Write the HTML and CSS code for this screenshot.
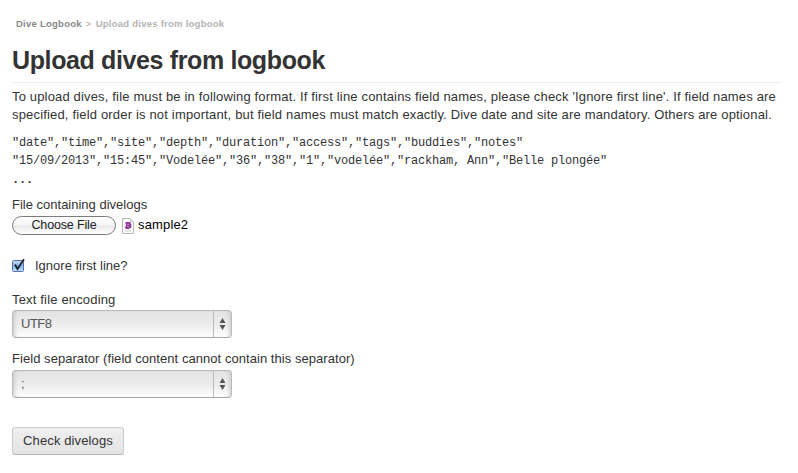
FILE: index.html
```html
<!DOCTYPE html>
<html lang="en">
<head>
<meta charset="utf-8">
<title>Upload dives from logbook</title>
<link rel="stylesheet" href="styles.css">
</head>
<body>
<nav class="breadcrumb"><a class="crumb">Dive Logbook</a><span class="divider">&gt;</span><span class="current">Upload dives from logbook</span></nav>
<h1 class="title"><span>Upload dives from logbook</span></h1>
<p class="intro"><span class="line-a">To upload dives, file must be in following format. If first line contains field names, please check 'Ignore first line'. If field names are</span><br><span class="line-b">specified, field order is not important, but field names must match exactly. Dive date and site are mandatory. Others are optional.</span></p>
<pre class="sample">"date","time","site","depth","duration","access","tags","buddies","notes"
"15/09/2013","15:45","Vodelée","36","38","1","vodelée","rackham, Ann","Belle plongée"
<span class="dots">...</span></pre>
<form class="form">
  <label class="label label-file"><span>File containing divelogs</span></label>
  <div class="file">
    <button type="button" class="choose"><span>Choose File</span></button>
    <svg class="doc" width="12" height="16" viewBox="0 0 12 16">
      <path d="M.5.5h8l3 3v12H.5z" fill="#fdfdfd" stroke="#b9b9b9"/>
      <path d="M8.500.5v3h3" fill="#eee" stroke="#c8c8c8"/>
      <path d="M3.500 4h5v1.500h.8v4.500H8l-1 1H4l-1-1V8.500h1V6.500h-.5z" fill="#8d3c98"/>
      <path d="M5 6.300h2M5 8.700h2" stroke="#d9b3df" stroke-width=".7"/>
      <path d="M3 13h6" stroke="#bbb" stroke-dasharray="1.500 .5"/>
    </svg>
    <span class="filename">sample2</span>
  </div>
  <label class="check">
    <svg width="14" height="16" viewBox="0 0 14 16">
      <defs><linearGradient id="blue" x2="0" y2="1"><stop stop-color="#c9def6"/><stop offset=".5" stop-color="#82b4ea"/><stop offset="1" stop-color="#bce6ff"/></linearGradient></defs>
      <rect x=".5" y="2.500" width="11" height="11" rx="1" fill="url(#blue)" stroke="#5872a5"/>
      <path d="M3 6.500l2.500 4.500L12 1.300" fill="none" stroke="#1c2430" stroke-width="1.900"/>
    </svg>
    <span>Ignore first line?</span>
  </label>
  <label class="label label-enc"><span>Text file encoding</span></label>
  <div class="select"><span class="value">UTF8</span><span class="arrows"><svg width="7" height="12" viewBox="0 0 7 12"><path d="M3.500 0L6.500 5h-6zM3.500 12L.5 7h6z" fill="#555"/></svg></span></div>
  <label class="label label-sep"><span>Field separator (field content cannot contain this separator)</span></label>
  <div class="select"><span class="value">;</span><span class="arrows"><svg width="7" height="12" viewBox="0 0 7 12"><path d="M3.500 0L6.500 5h-6zM3.500 12L.5 7h6z" fill="#555"/></svg></span></div>
  <button type="button" class="submit"><span>Check divelogs</span></button>
</form>
</body>
</html>
```
FILE: styles.css
```css
* { box-sizing: border-box; }
body {
  margin: 0;
  padding: 15px 16px 0 12px;
  background: #fff;
  color: #333;
  font: 13px/18px "Liberation Sans", Arial, sans-serif;
  white-space: nowrap;
  overflow: hidden;
}
.breadcrumb {
  display: flex;
  gap: 4px;
  height: 17px;
  padding-left: 4px;
  font-size: 9.5px;
  font-weight: bold;
  letter-spacing: 0.25px;
}
.crumb { color: #888; }
.divider { color: #aaa; font-weight: normal; }
.current { color: #b3b3b3; }
.title {
  height: 51px;
  margin: 0 0 5px;
  padding-top: 10px;
  border-bottom: 1px solid #eee;
  font-size: 25px;
  line-height: 36px;
  letter-spacing: -0.37px;
}
.intro { margin: 0 0 10px; }
.line-a { letter-spacing: 0.163px; }
.line-b { letter-spacing: 0.173px; }
.sample {
  height: 53px;
  margin: 0;
  font: 12px/18px "Liberation Mono", monospace;
  letter-spacing: -0.2px;
}
.dots { font-weight: bold; position: relative; top: 1px; }
.label { display: block; height: 18px; }
.label-file { margin-top: 9px; }
.file { display: flex; align-items: center; height: 20px; margin-top: 1px; }
.choose {
  width: 104px;
  height: 19px;
  padding: 0;
  border: 1px solid #7c7c7c;
  border-radius: 10px;
  background: linear-gradient(#fff, #f5f5f5 48%, #e9e9e9 52%, #fff);
  color: #222;
  font: 12.5px/16px "Liberation Sans", Arial, sans-serif;
  letter-spacing: -0.15px;
}
.doc { margin: 2px 4px 0 6px; }
.filename { color: #000; letter-spacing: 0.15px; }
.check { display: flex; align-items: center; height: 18px; margin-top: 22px; }
.check svg { margin-right: 9px; }
.label-enc { margin-top: 16px; letter-spacing: 0.17px; }
.select {
  display: flex;
  width: 220px;
  height: 28px;
  margin-top: 1px;
  border: 1px solid #bbb;
  border-bottom-color: #aaa;
  border-radius: 4px;
  background: linear-gradient(#e3e3e3, #ededed 55%, #fff);
  box-shadow: inset 4px 0 4px -3px #c4c4c4, inset -4px 0 4px -3px #c4c4c4;
  line-height: 26px;
  color: #555;
}
.value { flex: 1; padding-left: 8px; letter-spacing: -0.5px; }
.arrows { display: flex; width: 18px; align-items: center; justify-content: center; border-left: 1px solid #bbb; }
.label-sep { margin: 12px 0 2px; letter-spacing: 0.05px; }
.submit {
  display: block;
  width: 112px;
  height: 28px;
  margin-top: 29px;
  padding: 0;
  border: 1px solid #ccc;
  border-bottom-color: #b3b3b3;
  border-radius: 3px;
  background: linear-gradient(#f0f0f0, #e3e3e3);
  box-shadow: 0 1px 1px #eee;
  color: #333;
  font: 13px/18px "Liberation Sans", Arial, sans-serif;
  letter-spacing: 0.12px;
}
```
